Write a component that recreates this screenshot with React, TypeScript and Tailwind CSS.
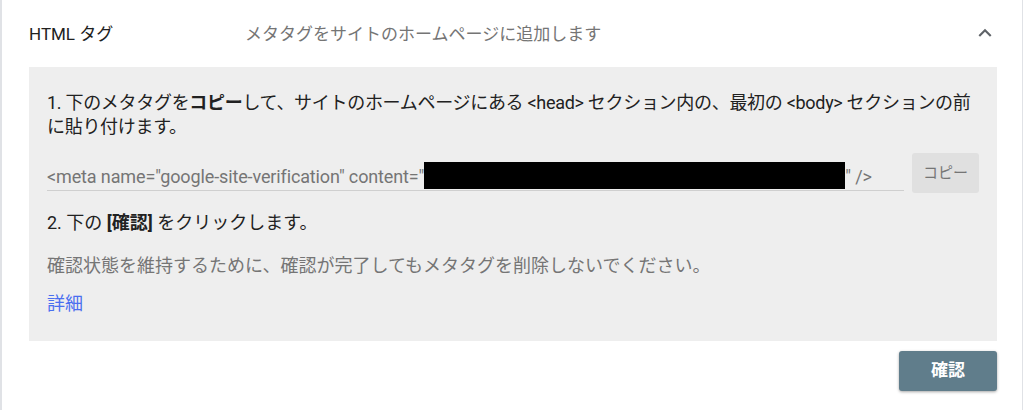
const font = { fontFamily: 'Roboto, "Noto Sans CJK JP", sans-serif' };

export default function App() {
  return (
    <div className="h-[410px] w-[1024px] bg-white">
      <div
        className="h-[410px] w-[1023px] border-l-2 border-r border-[#e0e2e6] bg-white pl-[27px] pr-[25px]"
        style={font}
      >
        {/* Header */}
        <div className="flex h-[67px] items-center">
          <div className="w-[216px] pt-[2px] text-[17px] text-[#212121]">HTML タグ</div>
          <div className="flex-1 pt-[2px] text-[17px] text-[#757575]">メタタグをサイトのホームページに追加します</div>
          <svg width="26" height="26" viewBox="0 0 24 24" className="mr-[-1px] mt-[-2px]">
            <path d="M7.41 15.41L12 10.83l4.59 4.58L18 14l-6-6-6 6z" fill="#5f6368" />
          </svg>
        </div>

        {/* Panel */}
        <div className="bg-[#eeeeee] pl-[18px] pr-[18px] pt-[24px] pb-[25px]">
          <p className="text-[18px] leading-[24px] tracking-[-0.3px] text-[#212121]">
            <span className="whitespace-nowrap">
              1. 下のメタタグを<span className="font-bold">コピー</span>して、サイトのホームページにある &lt;head&gt; セクション内の、最初の &lt;body&gt; セクションの前
            </span>
            <br />
            に貼り付けます。
          </p>

          <div className="mt-[14px] flex items-start gap-[8px]">
            <div className="flex h-[38px] flex-1 items-end border-b border-[#cfcfcf] pb-[2px] text-[18px] leading-[22px] tracking-[-0.13px] text-[#757575]">
              <span className="whitespace-nowrap">&lt;meta name="google-site-verification" content="</span>
              <span className="mb-[-1px] inline-block h-[27px] w-[421px] shrink-0 bg-black" />
              <span className="whitespace-nowrap">" /&gt;</span>
            </div>
            <button className="h-[40px] w-[67px] rounded-[3px] bg-[#e0e0e0] text-[15px] text-[#757575]">
              コピー
            </button>
          </div>

          <p className="mt-[18px] text-[18px] leading-[24px] text-[#212121]">
            2. 下の <span className="font-bold">[確認]</span> をクリックします。
          </p>

          <p className="mt-[19px] text-[18px] leading-[24px] text-[#757575]">
            確認状態を維持するために、確認が完了してもメタタグを削除しないでください。
          </p>

          <p className="mt-[14px] text-[18px] leading-[24px] text-[#4a6ff0]">詳細</p>
        </div>

        {/* Footer */}
        <div className="flex justify-end pt-[10px]">
          <button className="h-[40px] w-[98px] rounded-[3px] bg-[#607d8b] text-[17px] font-bold text-white shadow-[0_1px_3px_rgba(0,0,0,0.35)]">
            確認
          </button>
        </div>
      </div>
    </div>
  );
}
